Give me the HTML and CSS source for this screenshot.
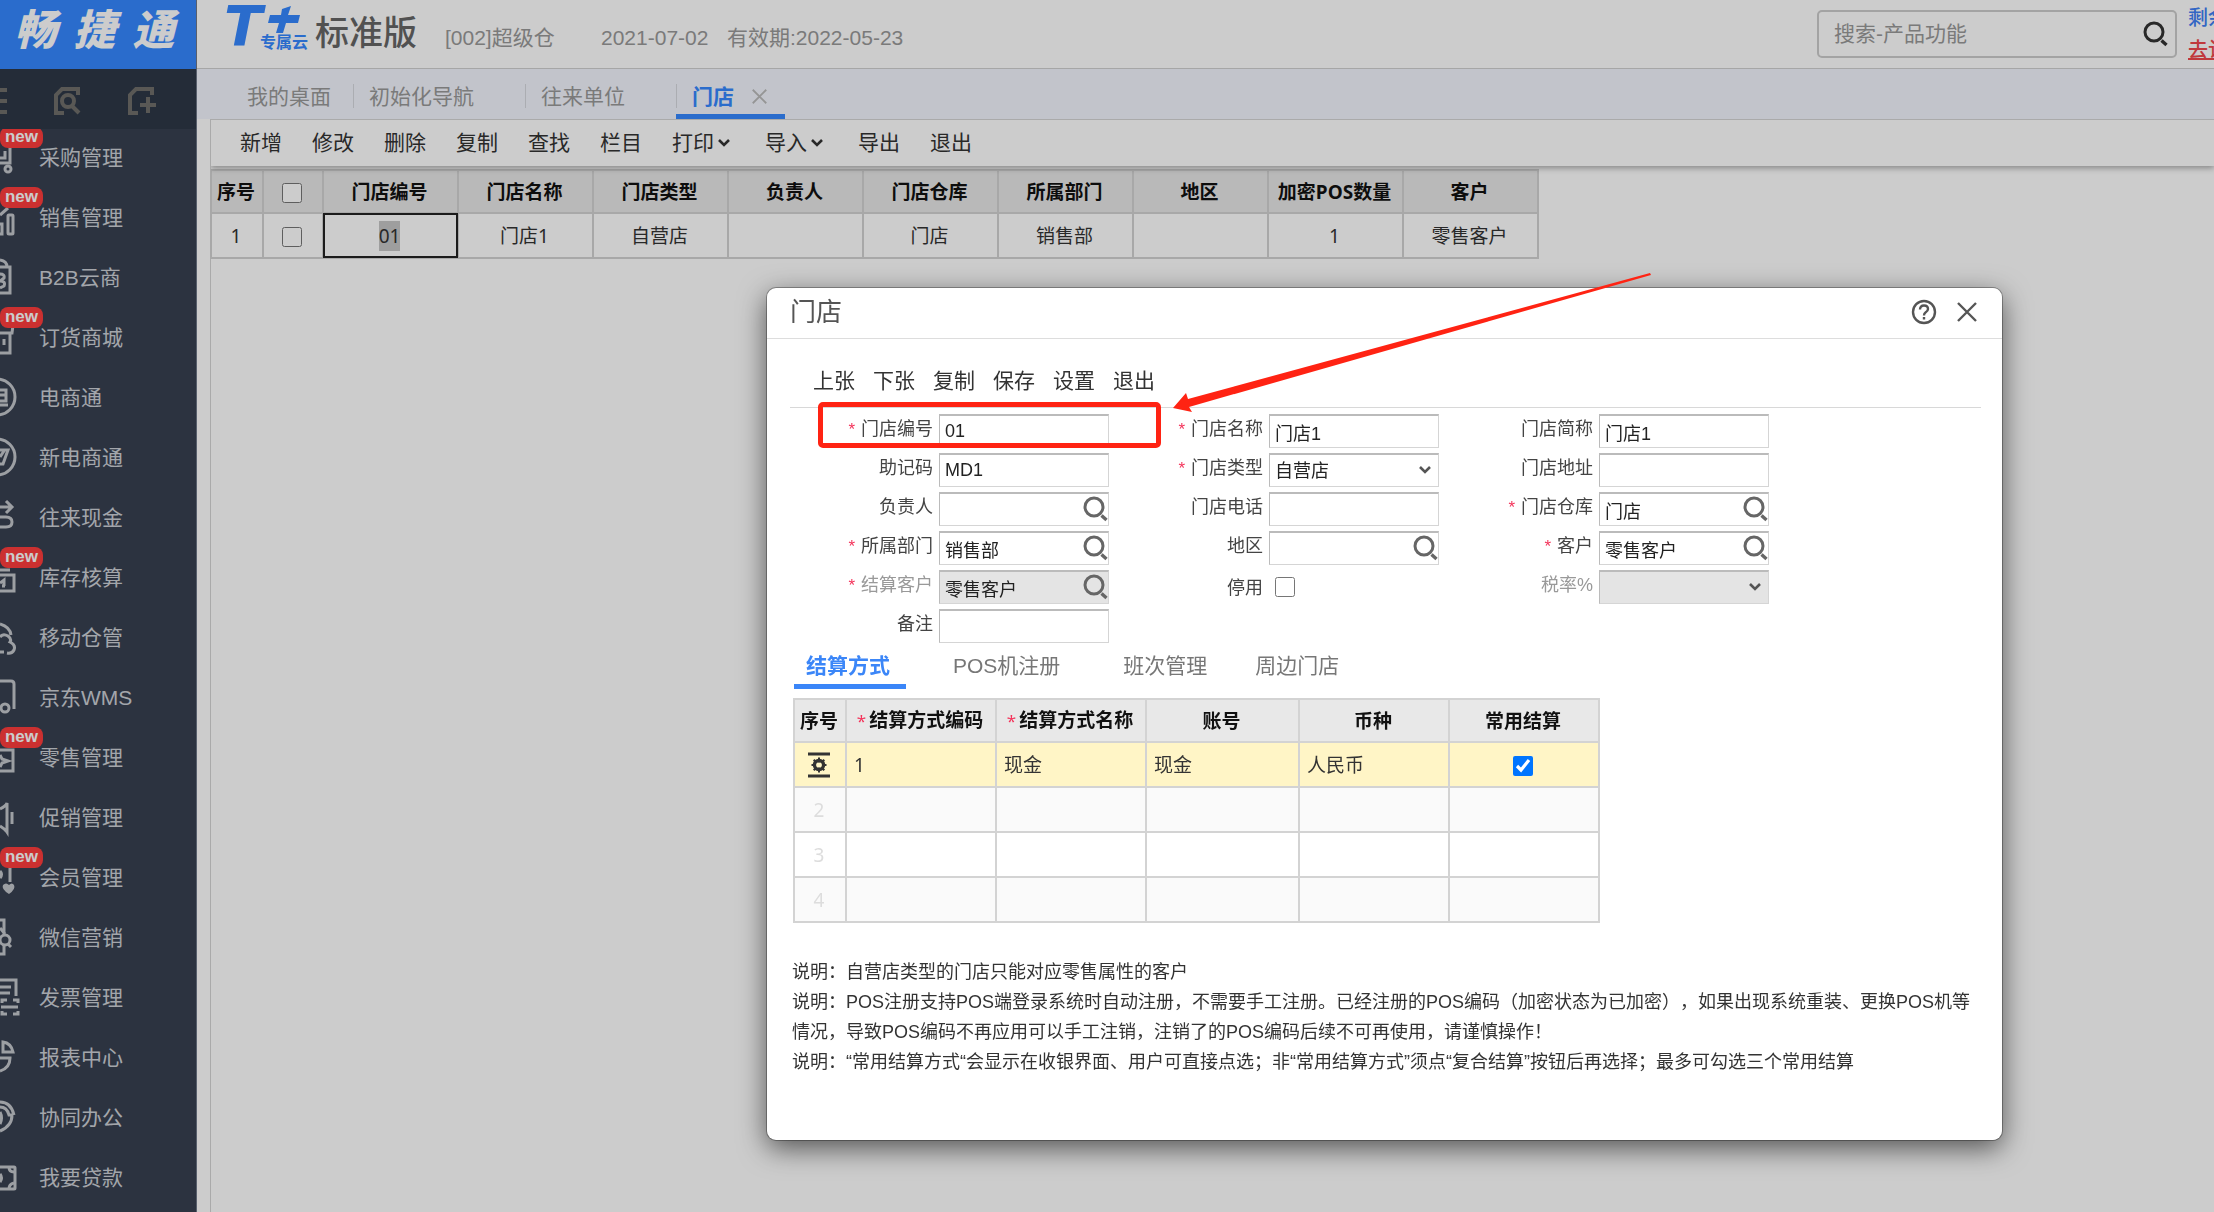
FILE: index.html
```html
<!DOCTYPE html>
<html lang="zh-CN">
<head>
<meta charset="utf-8">
<title>门店</title>
<link rel="stylesheet" href="styles.css">
</head>
<body>
<svg class="defs" width="0" height="0" aria-hidden="true">
  <symbol id="i-search" viewBox="0 0 26 26"><circle cx="11" cy="11" r="9" fill="none" stroke="currentColor" stroke-width="3"/><path d="M18.500 19.500 23.500 24" stroke="currentColor" stroke-width="3.400" fill="none"/></symbol>
  <symbol id="i-chev" viewBox="0 0 12 10"><path d="M1 2l5 5 5-5" fill="none" stroke="currentColor" stroke-width="2.600"/></symbol>
  <symbol id="i-close" viewBox="0 0 20 20"><path d="M1 1l18 18M19 1 1 19" fill="none" stroke="currentColor" stroke-width="2.400"/></symbol>
</svg>

<div class="app">
  <aside class="side">
    <div class="brand"><span>畅</span><span>捷</span><span>通</span></div>
    <div class="side-tools">
      <svg width="8" height="28" viewBox="0 0 8 28"><path d="M0 3h7M0 14h7M0 25h7"/></svg>
      <svg width="28" height="28" viewBox="0 0 28 28"><path d="M24 8V2H8L2 8v18h8"/><circle cx="14" cy="14" r="6"/><path d="M18 19l7 7"/></svg>
      <svg width="28" height="28" viewBox="0 0 28 28"><path d="M24 8V2H8L2 8v18h8M12 18h16M20 10v16"/></svg>
    </div>
    <nav class="menu">
      <a href="#"><svg viewBox="0 0 20 60"><path d="M10 16v19H0M5 23v7H0"/><circle cx="8" cy="41" r="3"/></svg>采购管理<b class="new">new</b></a>
      <a href="#"><svg viewBox="0 0 20 60"><path d="M0 27l8-7M-3 46v-10h5v10z"/><rect x="8" y="27" width="5" height="19" rx="1"/></svg>销售管理<b class="new">new</b></a>
      <a href="#"><svg viewBox="0 0 20 60"><path d="M0 19h10v26H0M7 19q0-6-7-7M0 26q5 0 4 4l-4 3q6 0 4 5l-4 2"/></svg>B2B云商</a>
      <a href="#"><svg viewBox="0 0 20 60"><path d="M0 25h12l1-8M10 25v20H0M4 31v6"/></svg>订货商城<b class="new">new</b></a>
      <a href="#"><svg viewBox="0 0 20 60"><circle cx="-3" cy="29" r="18"/><path d="M0 22h6v11H0M0 27h6M0 37h8"/></svg>电商通</a>
      <a href="#"><svg viewBox="0 0 20 60"><circle cx="-3" cy="29" r="18"/><path d="M0 22h8L3 36H0M0 29l4-6"/></svg>新电商通</a>
      <a href="#"><svg viewBox="0 0 20 60"><path d="M0 19h11M6 13l6 6-6 6M0 29h6q6 0 6 5t-6 5H0"/></svg>往来现金</a>
      <a href="#"><svg viewBox="0 0 20 60"><path d="M0 22h10M0 27h14v16H0M0 35l4-3v6M2 38h3"/></svg>库存核算<b class="new">new</b></a>
      <a href="#"><svg viewBox="0 0 20 60"><path d="M0 16q10 3 11 11M0 29q3-4 8-1 4 3 2 6 6 3 4 8-2 4-7 3M0 44h4"/></svg>移动仓管</a>
      <a href="#"><svg viewBox="0 0 20 60"><path d="M0 13h11q3 0 3 3v25M0 40h1"/><circle cx="5" cy="40" r="4"/></svg>京东WMS</a>
      <a href="#"><svg viewBox="0 0 20 60"><path d="M0 22h13v21H0M0 27l2 4 6 2-6 2-2 4"/></svg>零售管理<b class="new">new</b></a>
      <a href="#"><svg viewBox="0 0 20 60"><path d="M0 21q6-3 7-6v29q-2-3-7-6M12 24v12" /></svg>促销管理</a>
      <a href="#"><svg viewBox="0 0 20 60"><path d="M10 16v18M0 23q3 3 0 7"/><path class="solid" d="M9 46q-8-5-6-9 3-3 6 0 3-3 5 0 2 4-5 9z"/></svg>会员管理<b class="new">new</b></a>
      <a href="#"><svg viewBox="0 0 20 60"><path d="M0 12h4v14M0 20l5 6M4 37v9H0M8 36l3 3"/><circle cx="5" cy="32" r="5"/></svg>微信营销</a>
      <a href="#"><svg viewBox="0 0 20 60"><path d="M0 12h16v16M0 19h11M0 25h10M2 35v-3h5M13 32h5v3M2 43v3h5M13 46h5v-3M1 39h17"/></svg>发票管理</a>
      <a href="#"><svg viewBox="0 0 20 60"><path d="M3 14q8 1 10 10H3zM0 30h10q0 10-10 13"/></svg>报表中心</a>
      <a href="#"><svg viewBox="0 0 20 60"><path d="M0 14q11 0 14 13M0 19q7 0 9 8h3q0 11-12 16M0 24q3 6 0 12"/></svg>协同办公</a>
      <a href="#"><svg viewBox="0 0 20 60"><rect x="-8" y="19" width="23" height="22" rx="1"/><path d="M9 19q0 5 5 5M9 41q0-5 5-6M0 26q3 4 0 8"/></svg>我要贷款</a>
    </nav>
  </aside>

  <div class="main">
    <header class="top">
      <div class="product">
        <span class="logo-t">T</span>
        <span class="logo-side">
          <svg width="32" height="28" viewBox="0 0 32 28"><path d="M14 3 23 0 20 9H32L30 17H18L15 27H8L11 17H0L2 9H13z" fill="#3588ff"/></svg>
          <span class="cloud">专属云</span>
        </span>
        <span class="edition">标准版</span>
      </div>
      <span class="account">[002]超级仓</span>
      <span class="date">2021-07-02</span>
      <span>有效期:2022-05-23</span>
      <form class="search">
        <input type="text" placeholder="搜索-产品功能" aria-label="搜索-产品功能">
        <button type="button" aria-label="搜索"><svg width="26" height="26"><use href="#i-search"/></svg></button>
      </form>
      <div class="quota"><span>剩余</span><a href="#">去认证</a></div>
    </header>

    <nav class="tabs">
      <a class="home" href="#">我的桌面</a>
      <a href="#">初始化导航</a>
      <a href="#">往来单位</a>
      <a class="on" href="#">门店<svg width="15" height="15"><use href="#i-close"/></svg></a>
    </nav>

    <section class="panel">
      <div class="bar">
        <button>新增</button><button>修改</button><button>删除</button><button>复制</button><button>查找</button><button>栏目</button>
        <button class="drop">打印<svg width="12" height="10"><use href="#i-chev"/></svg></button>
        <button class="drop">导入<svg width="12" height="10"><use href="#i-chev"/></svg></button>
        <button>导出</button><button>退出</button>
      </div>
      <table class="grid list">
        <colgroup><col class="c-no"><col class="c-tick"><col span="9" class="c-std"></colgroup>
        <thead><tr><th>序号</th><th><input type="checkbox" aria-label="全选"></th><th>门店编号</th><th>门店名称</th><th>门店类型</th><th>负责人</th><th>门店仓库</th><th>所属部门</th><th>地区</th><th>加密POS数量</th><th>客户</th></tr></thead>
        <tbody><tr><td>1</td><td><input type="checkbox" aria-label="选择第1行"></td><td class="cur"><mark>01</mark></td><td>门店1</td><td>自营店</td><td></td><td>门店</td><td>销售部</td><td></td><td>1</td><td>零售客户</td></tr></tbody>
      </table>
    </section>
  </div>
</div>

<div class="shade"></div>

<div class="dialog" role="dialog" aria-labelledby="dlg-title">
  <div class="dlg-head">
    <h1 id="dlg-title">门店</h1>
    <button aria-label="帮助"><svg width="26" height="26" viewBox="0 0 26 26" fill="none" stroke="currentColor" stroke-width="2.400"><circle cx="13" cy="13" r="11"/><path d="M9 10.500q0-4 4-4t4 3.500q0 2-2.500 3.500-1.500 1-1.500 3M13 18v2.500"/></svg></button>
    <button aria-label="关闭"><svg width="20" height="20"><use href="#i-close"/></svg></button>
  </div>
  <div class="dlg-bar">
    <button>上张</button><button>下张</button><button>复制</button><button>保存</button><button>设置</button><button>退出</button>
  </div>

  <form class="fields">
    <label class="req" for="f1">门店编号</label><div class="box"><input id="f1" type="text" value="01"></div>
    <label class="req" for="f2">门店名称</label><div class="box"><input id="f2" type="text" value="门店1"></div>
    <label for="f3">门店简称</label><div class="box"><input id="f3" type="text" value="门店1"></div>

    <label for="f4">助记码</label><div class="box"><input id="f4" type="text" value="MD1"></div>
    <label class="req" for="f5">门店类型</label><div class="box"><select id="f5"><option>自营店</option></select><svg class="chev" width="12" height="10"><use href="#i-chev"/></svg></div>
    <label for="f6">门店地址</label><div class="box"><input id="f6" type="text"></div>

    <label for="f7">负责人</label><div class="box"><input id="f7" type="text"><svg class="find" width="26" height="26"><use href="#i-search"/></svg></div>
    <label for="f8">门店电话</label><div class="box"><input id="f8" type="text"></div>
    <label class="req" for="f9">门店仓库</label><div class="box"><input id="f9" type="text" value="门店"><svg class="find" width="26" height="26"><use href="#i-search"/></svg></div>

    <label class="req" for="f10">所属部门</label><div class="box"><input id="f10" type="text" value="销售部"><svg class="find" width="26" height="26"><use href="#i-search"/></svg></div>
    <label for="f11">地区</label><div class="box"><input id="f11" type="text"><svg class="find" width="26" height="26"><use href="#i-search"/></svg></div>
    <label class="req" for="f12">客户</label><div class="box"><input id="f12" type="text" value="零售客户"><svg class="find" width="26" height="26"><use href="#i-search"/></svg></div>

    <label class="req off" for="f13">结算客户</label><div class="box"><input id="f13" type="text" value="零售客户" disabled><svg class="find" width="26" height="26"><use href="#i-search"/></svg></div>
    <label class="low" for="f14">停用</label><div class="box tick"><input id="f14" type="checkbox"></div>
    <label class="off" for="f15">税率%</label><div class="box"><select id="f15" disabled><option></option></select><svg class="chev" width="12" height="10"><use href="#i-chev"/></svg></div>

    <label for="f16">备注</label><div class="box"><input id="f16" type="text"></div>
  </form>

  <div class="dlg-tabs">
    <a class="on wide" href="#">结算方式</a><a class="wide" href="#">POS机注册</a><a href="#">班次管理</a><a href="#">周边门店</a>
  </div>

  <table class="grid pay">
    <colgroup><col class="c-no"><col class="c-pay"><col class="c-pay"><col class="c-acct"><col class="c-pay"><col class="c-pay"></colgroup>
    <thead><tr><th>序号</th><th class="req">结算方式编码</th><th class="req">结算方式名称</th><th>账号</th><th>币种</th><th>常用结算</th></tr></thead>
    <tbody>
      <tr class="sel"><td class="no"><svg width="22" height="26" viewBox="0 0 22 26" fill="none" stroke="#333"><path d="M0 2h22M0 24h22" stroke-width="3"/><circle cx="11" cy="13" r="4.500" stroke-width="3.500"/><path d="M11 5.500v15M3.500 13h3M15.500 13h3M5.700 7.700l2 2M14.300 16.300l2 2M5.700 18.300l2-2M14.300 9.700l2-2" stroke-width="2"/><circle cx="11" cy="13" r="2.500" fill="#fff5c6" stroke="none"/></svg></td><td>1</td><td>现金</td><td>现金</td><td>人民币</td><td class="mid"><input type="checkbox" checked aria-label="常用结算"></td></tr>
      <tr class="alt"><td class="no">2</td><td></td><td></td><td></td><td></td><td></td></tr>
      <tr><td class="no">3</td><td></td><td></td><td></td><td></td><td></td></tr>
      <tr class="alt"><td class="no">4</td><td></td><td></td><td></td><td></td><td></td></tr>
    </tbody>
  </table>

  <div class="notes">
    <p>说明：自营店类型的门店只能对应零售属性的客户</p>
    <p>说明：POS注册支持POS端登录系统时自动注册，不需要手工注册。已经注册的POS编码（加密状态为已加密），如果出现系统重装、更换POS机等情况，导致POS编码不再应用可以手工注销，注销了的POS编码后续不可再使用，请谨慎操作！</p>
    <p>说明：“常用结算方式“会显示在收银界面、用户可直接点选；非“常用结算方式”须点“复合结算”按钮后再选择；最多可勾选三个常用结算</p>
  </div>

  <div class="ring"></div>
  <svg class="arrow" width="480" height="142" viewBox="0 0 480 142"><path d="M478 1 16 127 14 121 1 136 20 140 17 135 479 3z" fill="#ff2313"/></svg>
</div>
</body>
</html>
```
FILE: styles.css
```css
* { box-sizing: border-box; }

body {
  margin: 0;
  height: 100vh;
  overflow: hidden;
  background: #fff;
  font-family: "Liberation Sans", "Noto Sans CJK SC", sans-serif;
  font-size: 21px;
  line-height: 30px;
  color: #333;
  text-spacing-trim: space-all;
}

a { color: inherit; text-decoration: none; }
button { border: 0; padding: 0; background: none; font: inherit; color: inherit; }
svg { display: block; flex: none; }
input[type="checkbox"] { width: 20px; height: 20px; margin: 0; vertical-align: middle; }
.defs { position: absolute; }

.app { display: flex; height: 100vh; }

/* Sidebar */
.side {
  flex: none;
  width: 197px;
  overflow: hidden;
  background: #384051;
  border-right: 1px solid #6f7787;
}
.brand {
  display: flex;
  justify-content: center;
  gap: 17px;
  height: 69px;
  margin-right: -1px;
  padding-right: 8px;
  background: #3588ff;
  color: #fff;
  font-size: 42px;
  font-weight: 900;
  font-style: italic;
  line-height: 62px;
}
.side-tools {
  display: flex;
  align-items: center;
  gap: 46px;
  height: 60px;
  padding-top: 4px;
  background: #2d3847;
}
.side-tools svg { fill: none; stroke: #706f6b; stroke-width: 4; }
.menu { display: flex; flex-direction: column; margin-top: -1px; clip-path: inset(1px 0 0 0); }
.menu a {
  position: relative;
  display: flex;
  align-items: center;
  gap: 19px;
  height: 60px;
  color: #ccd0d6;
}
.menu svg { width: 20px; height: 60px; fill: none; stroke: #c4c7cc; stroke-width: 3; }
.menu .solid { fill: #c4c7cc; stroke: none; }
.new {
  position: absolute;
  left: 0;
  top: -1px;
  width: 43px;
  height: 21px;
  border-radius: 8px;
  background: #fe3c3c;
  color: #fff;
  font-size: 17px;
  line-height: 20px;
  text-align: center;
}

/* Header */
.main { flex: 1; min-width: 0; display: flex; flex-direction: column; }
.top {
  display: flex;
  align-items: center;
  height: 69px;
  padding-left: 27px;
  border-bottom: 1px solid #d0d0d0;
  color: #999;
  white-space: nowrap;
}
.top > span { padding-top: 8px; }
.product { display: flex; flex: none; width: 221px; height: 69px; color: #3588ff; }
.logo-t {
  width: 34px;
  font: italic 700 56px/52px "DejaVu Sans", sans-serif;
}
.logo-side { display: flex; flex-direction: column; align-items: flex-end; width: 50px; padding-top: 6px; }
.logo-side svg { margin-right: 8px; }
.cloud { font-size: 16px; font-weight: 700; line-height: 18px; }
.edition { margin-left: 7px; color: #666; font-size: 34px; font-weight: 500; line-height: 66px; }
.account { width: 156px; }
.date { width: 126px; }
.search {
  display: flex;
  align-items: center;
  flex: none;
  width: 360px;
  height: 48px;
  margin-left: auto;
  border: 2px solid #ccc;
  border-radius: 5px;
}
.search input { flex: 1; min-width: 0; height: 44px; padding: 0 15px; border: 0; background: none; font: inherit; }
.search input::placeholder { color: #999; }
.search button { display: flex; justify-content: flex-end; width: 44px; padding-right: 6px; color: #333; }
.quota {
  display: flex;
  flex-direction: column;
  flex: none;
  width: 26px;
  margin: 0 0 0 11px;
  font-size: 20px;
  font-weight: 500;
  line-height: 32px;
  color: #4080f5;
}
.quota a { color: #f0484c; text-decoration: underline; }

.tabs {
  display: flex;
  height: 50px;
  padding-left: 34px;
  background: #f3f6fe;
  color: #999;
  line-height: 55px;
}
.tabs a { display: flex; padding: 0 51px 0 16px; background: linear-gradient(#d6d9df, #d6d9df) 0 15px / 1px 24px no-repeat; }
.tabs .home { padding-right: 22px; background: none; }
.tabs .on { gap: 18px; padding-right: 18px; border-bottom: 5px solid #3588ff; color: #3588ff; font-weight: 700; }
.tabs .on svg { margin-top: 20px; color: #bbb; }

/* Store list */
.panel { flex: 1; margin-left: 13px; border-left: 1px solid #d5d5d5; }
.bar {
  position: relative;
  display: flex;
  align-items: center;
  gap: 30px;
  height: 47px;
  padding-left: 29px;
  border-top: 1px solid #d5d5d5;
  box-shadow: 0 2px 6px rgba(0, 0, 0, .35);
  clip-path: inset(0 0 -10px 0);
}
.drop { display: flex; align-items: center; gap: 4px; padding-right: 5px; }

.grid { border-collapse: collapse; table-layout: fixed; font-family: "Noto Sans", "Noto Sans CJK SC", sans-serif; font-size: 19px; line-height: 28px; }
.grid th, .grid td { height: 45px; padding: 0 2px 0 0; border: 2px solid #d3d3d3; white-space: nowrap; }
.grid th { height: 43px; background: #e8e8e8; color: #111; font-weight: 700; }
.c-no { width: 52px; }
.c-tick { width: 60px; }
.c-std { width: 135px; }
.c-pay { width: 150px; }
.c-acct { width: 153px; }
.list { width: 1327px; margin: 3px 0 0 -1px; text-align: center; }
.list .cur { outline: 2px solid #222; outline-offset: -2px; }
.list mark { background: #c6c6c6; color: inherit; padding: 2px 0; }

/* Dimming layer and dialog */
.shade { position: fixed; inset: 0; background: rgba(0, 0, 0, .2); }
.dialog {
  position: absolute;
  left: 767px;
  top: 288px;
  width: 1235px;
  padding-bottom: 63px;
  background: #fff;
  border-radius: 9px;
  box-shadow: 0 0 0 1px rgba(0, 0, 0, .3), 0 8px 28px rgba(0, 0, 0, .6);
}
.dlg-head {
  display: flex;
  align-items: center;
  gap: 20px;
  height: 51px;
  padding: 0 25px 3px 23px;
  border-bottom: 1px solid #ddd;
  color: #555;
}
.dlg-head h1 { flex: 1; margin: 0; font-size: 26px; font-weight: 400; }
.dlg-bar {
  display: flex;
  gap: 18px;
  height: 69px;
  margin: 0 21px 6px 23px;
  padding: 27px 23px 12px;
  border-bottom: 1px solid #d8d8d8;
}
.fields {
  display: grid;
  grid-template-columns: repeat(3, 148px 170px);
  column-gap: 6px;
  grid-auto-rows: 39px;
  padding-left: 18px;
  font-size: 18px;
  line-height: 30px;
}
.fields label { text-align: right; color: #444; }
.fields .off { color: #999; }
.fields .low { padding-top: 3px; }
.req::before { content: "*"; margin-right: 6px; color: #f4335a; font-size: 17px; }
.box { position: relative; }
.box input[type="text"], .box select {
  display: block;
  width: 170px;
  height: 34px;
  padding: 0 5px;
  border: 1px solid #d5d5d5;
  border-top: 2px solid #bbb;
  border-left-color: #bbb;
  border-radius: 0;
  background: #fff;
  color: #222;
  font: inherit;
  appearance: none;
}
.box input:disabled, .box select:disabled { background: #e4e4e4; opacity: 1; }
.find { position: absolute; right: 0; top: 4px; color: #666; }
.chev { position: absolute; right: 8px; top: 12px; color: #555; }
.tick { padding: 7px 6px; line-height: 20px; }
.tick input { display: block; }

.dlg-tabs { display: flex; gap: 20px; margin: 3px 0 9px 27px; color: #777; line-height: 30px; }
.dlg-tabs a { height: 38px; padding: 0 16px 0 12px; }
.dlg-tabs .wide { margin-right: 15px; }
.dlg-tabs .on { border-bottom: 5px solid #3b86f8; color: #3b86f8; font-weight: 700; }

.pay { width: 805px; margin-left: 26px; }
.pay .req::before { margin-right: 3px; font-weight: 400; }
.pay td { padding-left: 7px; }
.pay .sel { background: #fff5c6; }
.pay .alt { background: #fafafa; }
.pay .no { padding: 0 2px 0 0; text-align: center; color: #ddd; }
.pay .no svg { margin: 0 auto; }
.pay .mid { padding: 0 2px 0 0; text-align: center; }

.notes { margin: 34px 22px 0 25px; font-size: 18px; }
.notes p { margin: 0; }

/* Call-out on the store number field */
.ring {
  position: absolute;
  left: 51px;
  top: 114px;
  width: 343px;
  height: 46px;
  border: 5px solid #ff2313;
  border-radius: 5px;
}
.arrow { position: absolute; left: 405px; top: -16px; }
```
